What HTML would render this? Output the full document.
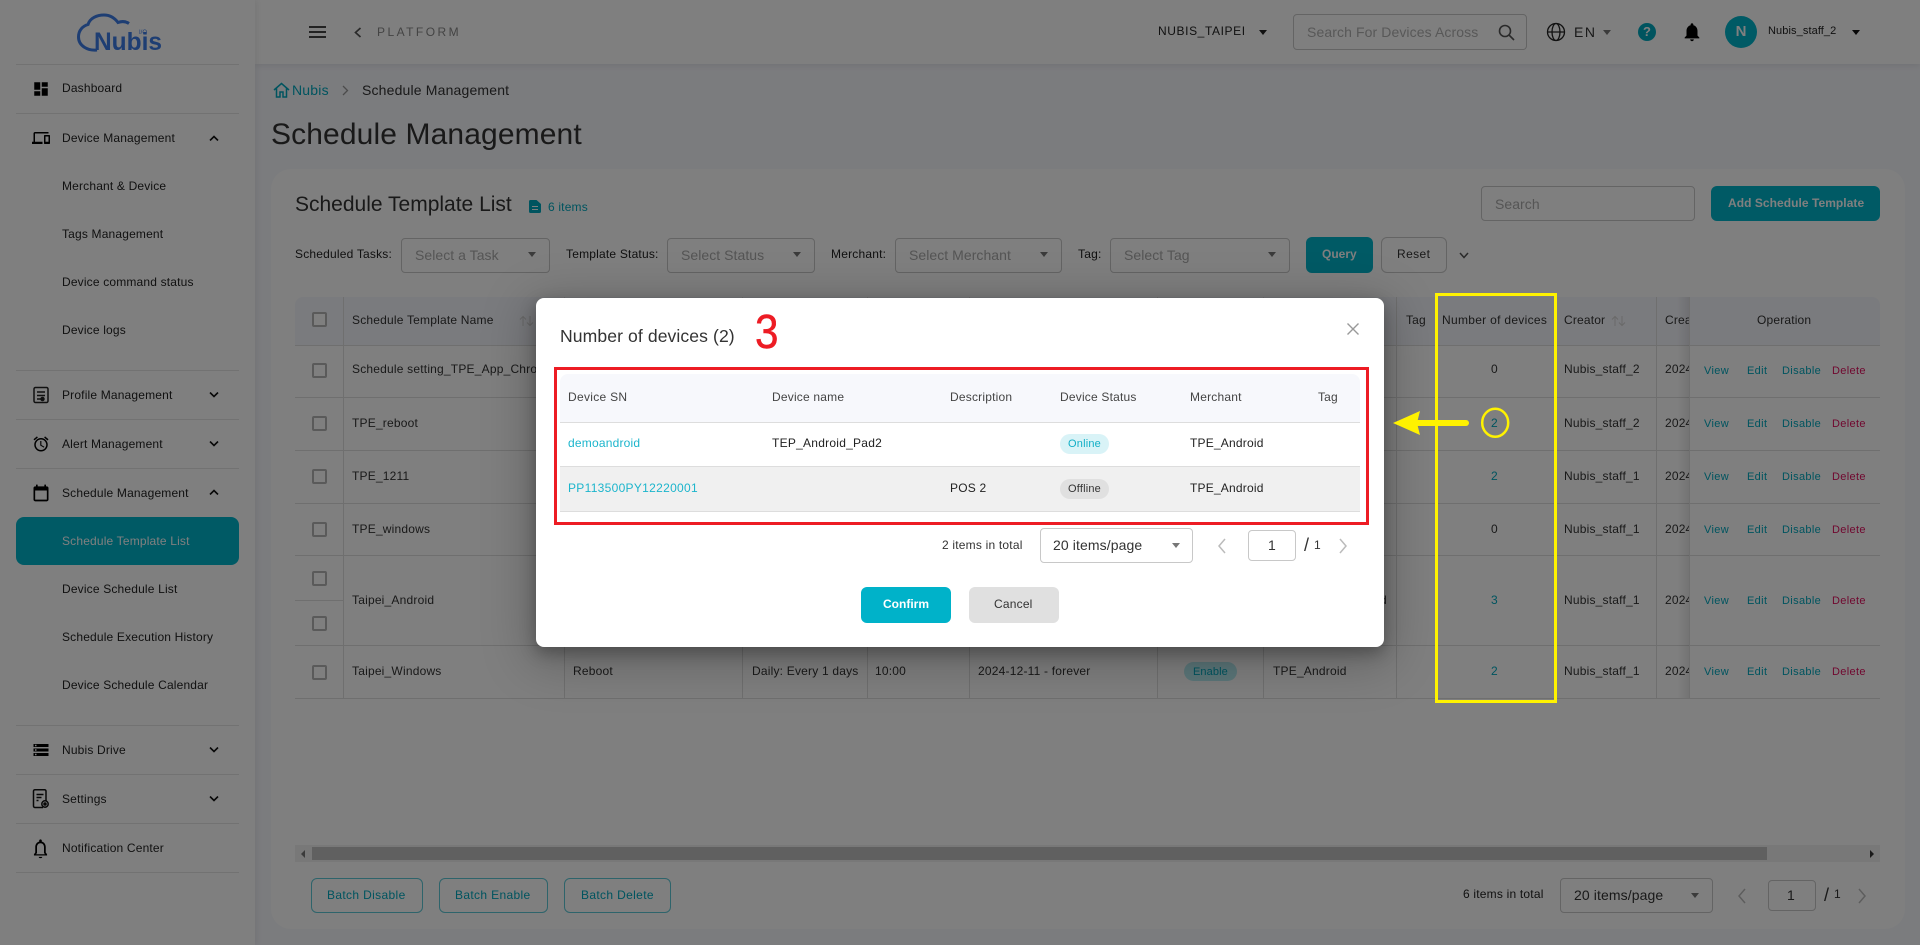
<!DOCTYPE html>
<html lang="en"><head><meta charset="utf-8"><title>Schedule Management</title>
<style>
*{box-sizing:border-box}
html,body{margin:0;padding:0;width:1920px;height:945px;overflow:hidden;background:#f7f8fd;font-family:"Liberation Sans",Arial,sans-serif}
.a{position:absolute}
.t{position:absolute;white-space:nowrap;line-height:16px;font-size:12px;letter-spacing:.17px;color:#333}
.s{color:#222;height:16px}
.hl{position:absolute;background:#dedede;height:1px}
.vl{position:absolute;background:#dedede;width:1px;top:297px;height:401px}
.sd{position:absolute;left:16px;width:223px;height:1px;background:#e4e4e4}
.ic{position:absolute;display:block;fill:#000}
.ch{position:absolute;left:209px;width:10px;height:6px;fill:none;stroke:#111;stroke-width:1.6}
.cb{position:absolute;left:312px;width:15px;height:15px;border:2px solid #b5b5b5;border-radius:2px;background:#fff}
.box{position:absolute;border:1px solid #c8c8c8;border-radius:4px;background:#fff}
.car{position:absolute;width:0;height:0;border-left:4px solid transparent;border-right:4px solid transparent;border-top:5px solid #777}
.ph{color:#aaa;font-size:14px;letter-spacing:.05px}
.tl{color:#00a9bf}
.del{color:#e0115f}
.op{font-size:11px;letter-spacing:.35px}
.pg{fill:none;stroke:#bbb;stroke-width:1.5;position:absolute}
.sort{position:absolute;fill:none;stroke:#d2d2d2;stroke-width:1}
</style></head><body>

<!-- PAGE -->
<div class="a" id="page" style="inset:0;width:1920px;height:945px;overflow:hidden">
<!-- top bar -->
<div class="a" style="left:255px;top:0;width:1665px;height:64px;background:#fff;box-shadow:0 2px 6px rgba(0,0,0,.08)"></div>
<!-- sidebar -->
<div class="a" style="left:0;top:0;width:255px;height:945px;background:#fff;box-shadow:2px 0 6px rgba(0,0,0,.07)"></div>

<!-- logo -->
<svg class="a" style="left:70px;top:8px" width="100" height="48" viewBox="70 8 100 48">
<path d="M97 50C88 51 78.500 46 78.500 37C78.500 30 83 26 88 24.500C90 18 97 15 104 15C111 15 115 18.500 118 22.500C122 21 126 21.500 129 23.500" fill="none" stroke="#3d7ce6" stroke-width="3"/>
<text x="94" y="50" font-family="Liberation Sans" font-weight="bold" font-size="25" textLength="68" lengthAdjust="spacingAndGlyphs" fill="#3d7ce6">Nubis</text>
<text x="139" y="34" font-family="Liberation Sans" font-size="6" fill="#3d7ce6">I/O</text>
</svg>

<!-- sidebar items -->
<div class="sd" style="top:64px"></div><div class="sd" style="top:113px"></div>
<div class="sd" style="top:370px"></div><div class="sd" style="top:419px"></div><div class="sd" style="top:468px"></div>
<div class="sd" style="top:725px"></div><div class="sd" style="top:774px"></div><div class="sd" style="top:823px"></div><div class="sd" style="top:872px"></div>
<div class="a" style="left:16px;top:517px;width:223px;height:48px;border-radius:8px;background:#00b4cb"></div>

<svg class="ic" style="left:32px;top:80px" width="18" height="18" viewBox="0 0 24 24"><path d="M3 13h8V3H3v10zm0 8h8v-6H3v6zm10 0h8V11h-8v10zm0-18v6h8V3h-8z"/></svg>
<div class="t s" style="left:62px;top:80px">Dashboard</div>
<svg class="ic" style="left:32px;top:129px" width="18" height="18" viewBox="0 0 24 24"><path d="M4 6h18V4H4c-1.100 0-2 .9-2 2v11H0v3h14v-3H4V6zm19 2h-6c-.55 0-1 .45-1 1v10c0 .55.45 1 1 1h6c.55 0 1-.45 1-1V9c0-.55-.45-1-1-1zm-1 9h-4v-7h4v7z"/></svg>
<div class="t s" style="left:62px;top:130px">Device Management</div>
<svg class="ch" style="top:135px" viewBox="0 0 10 6"><path d="M1 5.500L5 1.500L9 5.500"/></svg>
<div class="t s" style="left:62px;top:178px">Merchant &amp; Device</div>
<div class="t s" style="left:62px;top:226px">Tags Management</div>
<div class="t s" style="left:62px;top:274px">Device command status</div>
<div class="t s" style="left:62px;top:322px">Device logs</div>

<svg class="a" style="left:32px;top:386px" width="18" height="18" viewBox="0 0 18 18" fill="none" stroke="#222" stroke-width="1.500"><rect x="2" y="1.500" width="14" height="15" rx="1.500"/><path d="M5 6h8M5 9.500h8M5 13h5"/><circle cx="10.500" cy="13" r="1.500" fill="#222"/></svg>
<div class="t s" style="left:62px;top:387px">Profile Management</div>
<svg class="ch" style="top:392px" viewBox="0 0 10 6"><path d="M1 .5L5 4.500L9 .5"/></svg>
<svg class="ic" style="left:32px;top:435px" width="18" height="18" viewBox="0 0 24 24"><path d="M22 5.720l-4.600-3.860-1.290 1.530 4.600 3.860L22 5.720zM7.880 3.390L6.600 1.860 2 5.710l1.290 1.530 4.590-3.850zM12.500 8H11v6l4.750 2.850.75-1.230-4-2.370V8zM12 4c-4.970 0-9 4.030-9 9s4.030 9 9 9 9-4.030 9-9-4.030-9-9-9zm0 16c-3.870 0-7-3.130-7-7s3.130-7 7-7 7 3.130 7 7-3.130 7-7 7z"/></svg>
<div class="t s" style="left:62px;top:436px">Alert Management</div>
<svg class="ch" style="top:441px" viewBox="0 0 10 6"><path d="M1 .5L5 4.500L9 .5"/></svg>
<svg class="ic" style="left:31px;top:483px" width="20" height="20" viewBox="0 0 24 24"><path d="M19 4h-1V2h-2v2H8V2H6v2H5c-1.100 0-2 .9-2 2v14c0 1.100.9 2 2 2h14c1.100 0 2-.9 2-2V6c0-1.100-.9-2-2-2zm0 16H5V9h14v11z"/></svg>
<div class="t s" style="left:62px;top:485px">Schedule Management</div>
<svg class="ch" style="top:489px" viewBox="0 0 10 6"><path d="M1 5.500L5 1.500L9 5.500"/></svg>
<div class="t" style="left:62px;top:533px;color:#fff">Schedule Template List</div>
<div class="t s" style="left:62px;top:581px">Device Schedule List</div>
<div class="t s" style="left:62px;top:629px">Schedule Execution History</div>
<div class="t s" style="left:62px;top:677px">Device Schedule Calendar</div>

<svg class="ic" style="left:32px;top:741px" width="18" height="18" viewBox="0 0 24 24"><path d="M2 20h20v-4H2v4zm2-3h2v2H4v-2zM2 4v4h20V4H2zm4 3H4V5h2v2zm-4 7h20v-4H2v4zm2-3h2v2H4v-2z"/></svg>
<div class="t s" style="left:62px;top:742px">Nubis Drive</div>
<svg class="ch" style="top:747px" viewBox="0 0 10 6"><path d="M1 .5L5 4.500L9 .5"/></svg>
<svg class="a" style="left:32px;top:789px" width="18" height="20" viewBox="0 0 18 20" fill="none" stroke="#111" stroke-width="1.500"><path d="M11 18.500H3a1.500 1.500 0 0 1-1.500-1.500V2A1.500 1.500 0 0 1 3 .8h9A1.500 1.500 0 0 1 14 2v10"/><path d="M4.500 5.500h7M4.500 8.500h5M4.500 11.500h2"/><circle cx="13" cy="15" r="3.200"/><circle cx="13" cy="15" r="1" fill="#111"/></svg>
<div class="t s" style="left:62px;top:791px">Settings</div>
<svg class="ch" style="top:796px" viewBox="0 0 10 6"><path d="M1 .5L5 4.500L9 .5"/></svg>
<svg class="ic" style="left:30px;top:838px" width="21" height="21" viewBox="0 0 24 24"><path d="M12 23c1.100 0 2-.5 2-1.500h-4c0 1 .9 1.500 2 1.500zm6-6.500v-6c0-3.070-1.630-5.640-4.500-6.320V3c0-.83-.67-1.500-1.500-1.500s-1.500.67-1.500 1.500v1.180C7.640 4.860 6 7.420 6 10.500v6l-1.500 2v1.500h15v-1.500l-1.500-2zm-1 2H7l1-1.500v-6.500c0-2.480 1.510-4.500 4-4.500s4 2.020 4 4.500V17l1 1.500z"/></svg>
<div class="t s" style="left:62px;top:840px">Notification Center</div>

<!-- top bar contents -->
<svg class="a" style="left:309px;top:26px" width="17" height="12"><path d="M0 1h17M0 6h17M0 11h17" stroke="#444" stroke-width="2"/></svg>
<svg class="a" style="left:354px;top:27px" width="8" height="11" fill="none" stroke="#555" stroke-width="1.700"><path d="M6.500 1L1.500 5.500L6.500 10"/></svg>
<div class="t" style="left:377px;top:24px;color:#888;letter-spacing:2.450px;font-size:12px">PLATFORM</div>
<div class="t s" style="left:1158px;top:23px;letter-spacing:.6px;width:86px;overflow:hidden">NUBIS_TAIPEI</div>
<div class="car" style="left:1259px;top:30px;border-top-color:#222"></div>
<div class="box" style="left:1293px;top:14px;width:234px;height:36px"></div>
<div class="t ph" style="left:1307px;top:24px;width:171px;overflow:hidden;color:#b0b0b0;letter-spacing:.1px">Search For Devices Across</div>
<svg class="a" style="left:1498px;top:24px" width="17" height="17" fill="none" stroke="#555" stroke-width="1.600"><circle cx="7" cy="7" r="5.500"/><path d="M11 11L16 16"/></svg>
<svg class="a" style="left:1546px;top:22px" width="20" height="20" fill="none" stroke="#222" stroke-width="1.300"><circle cx="10" cy="10" r="8.500"/><ellipse cx="10" cy="10" rx="4" ry="8.500"/><path d="M1.500 10h17"/></svg>
<div class="t" style="left:1574px;top:24px;font-size:14px;letter-spacing:1.500px">EN</div>
<div class="car" style="left:1603px;top:30px"></div>
<div class="a" style="left:1638px;top:23px;width:18px;height:18px;border-radius:50%;background:#00a9bf;color:#fff;font:bold 13px/18px 'Liberation Sans',sans-serif;text-align:center">?</div>
<svg class="ic" style="left:1681px;top:21px" width="22" height="22" viewBox="0 0 24 24"><path d="M12 22c1.100 0 2-.9 2-2h-4c0 1.100.89 2 2 2zm6-6v-5c0-3.070-1.640-5.640-4.500-6.320V4c0-.83-.67-1.500-1.500-1.500s-1.500.67-1.500 1.500v.68C7.630 5.360 6 7.920 6 11v5l-2 2v1h16v-1l-2-2z"/></svg>
<div class="a" style="left:1725px;top:16px;width:32px;height:32px;border-radius:50%;background:#00b4cb;color:#fff;font:bold 15px/32px 'Liberation Sans',sans-serif;text-align:center">N</div>
<div class="t s" style="left:1768px;top:23px;font-size:11px;letter-spacing:.1px">Nubis_staff_2</div>
<div class="car" style="left:1852px;top:30px;border-top-color:#111"></div>

<!-- breadcrumb / title -->
<svg class="a" style="left:273px;top:82px" width="17" height="16" fill="none" stroke="#00a9bf" stroke-width="1.500"><path d="M1 8L8.500 1.500L16 8M3.500 6v9h3.500v-5h3v5h3.500V6"/></svg>
<div class="t tl" style="left:292px;top:82px;font-size:14px;letter-spacing:.2px">Nubis</div>
<svg class="a" style="left:342px;top:85px" width="7" height="11" fill="none" stroke="#999" stroke-width="1.300"><path d="M1 1L5.500 5.500L1 10"/></svg>
<div class="t" style="left:362px;top:82px;font-size:14px;letter-spacing:.17px">Schedule Management</div>
<div class="t" style="left:271px;top:116px;font-size:30px;line-height:38px;color:#333;letter-spacing:.12px">Schedule Management</div>

<!-- card -->
<div class="a" style="left:271px;top:169px;width:1634px;height:760px;background:#fff;border-radius:20px"></div>
<div class="t" style="left:295px;top:193px;font-size:21px;line-height:24px;letter-spacing:0">Schedule Template List</div>
<svg class="a" style="left:529px;top:200px" width="12" height="13"><path d="M1.500 0h6L12 4v7.500a1.500 1.500 0 0 1-1.500 1.500h-9A1.500 1.500 0 0 1 0 11.500v-10A1.500 1.500 0 0 1 1.500 0z" fill="#00a9bf"/><path d="M3 6.500h6M3 9.500h6" stroke="#fff" stroke-width="1.100"/></svg>
<div class="t tl" style="left:548px;top:199px">6 items</div>
<div class="box" style="left:1481px;top:186px;width:214px;height:35px;border-radius:4px"></div>
<div class="t ph" style="left:1495px;top:196px;color:#aaa">Search</div>
<div class="a" style="left:1711px;top:186px;width:169px;height:35px;border-radius:6px;background:#00b4cb"></div>
<div class="t" style="left:1728px;top:195px;color:#fff;font-weight:bold;letter-spacing:.05px;font-size:12px">Add Schedule Template</div>

<!-- filters -->
<div class="t s" style="left:295px;top:246px;letter-spacing:.2px">Scheduled Tasks:</div>
<div class="box" style="left:401px;top:238px;width:149px;height:35px"></div>
<div class="t ph" style="left:415px;top:247px">Select a Task</div><div class="car" style="left:528px;top:252px"></div>
<div class="t s" style="left:566px;top:246px;letter-spacing:.2px">Template Status:</div>
<div class="box" style="left:667px;top:238px;width:148px;height:35px"></div>
<div class="t ph" style="left:681px;top:247px">Select Status</div><div class="car" style="left:793px;top:252px"></div>
<div class="t s" style="left:831px;top:246px;letter-spacing:.2px">Merchant:</div>
<div class="box" style="left:895px;top:238px;width:167px;height:35px"></div>
<div class="t ph" style="left:909px;top:247px">Select Merchant</div><div class="car" style="left:1040px;top:252px"></div>
<div class="t s" style="left:1078px;top:246px;letter-spacing:.2px">Tag:</div>
<div class="box" style="left:1110px;top:238px;width:180px;height:35px"></div>
<div class="t ph" style="left:1124px;top:247px">Select Tag</div><div class="car" style="left:1268px;top:252px"></div>
<div class="a" style="left:1306px;top:237px;width:67px;height:36px;border-radius:6px;background:#00b4cb"></div>
<div class="t" style="left:1322px;top:246px;color:#fff;font-weight:bold;letter-spacing:0">Query</div>
<div class="box" style="left:1381px;top:237px;width:66px;height:36px;border-radius:6px"></div>
<div class="t" style="left:1397px;top:246px;letter-spacing:.4px">Reset</div>
<svg class="a" style="left:1459px;top:252px" width="10" height="7" fill="none" stroke="#555" stroke-width="1.500"><path d="M1 1L5 5.500L9 1"/></svg>

<!-- table -->
<div class="a" style="left:295px;top:297px;width:1585px;height:48px;background:#f5f6fc;border-radius:8px 8px 0 0"></div>
<div class="hl" style="left:295px;top:345px;width:1585px"></div>
<div class="hl" style="left:295px;top:397px;width:1585px"></div>
<div class="hl" style="left:295px;top:450px;width:1585px"></div>
<div class="hl" style="left:295px;top:503px;width:1585px"></div>
<div class="hl" style="left:295px;top:555px;width:1585px"></div>
<div class="hl" style="left:295px;top:600px;width:48px"></div>
<div class="hl" style="left:295px;top:645px;width:1585px"></div>
<div class="hl" style="left:295px;top:698px;width:1585px"></div>
<div class="vl" style="left:343px"></div><div class="vl" style="left:564px"></div><div class="vl" style="left:742px"></div>
<div class="vl" style="left:867px"></div><div class="vl" style="left:969px"></div><div class="vl" style="left:1157px"></div>
<div class="vl" style="left:1263px"></div><div class="vl" style="left:1396px"></div><div class="vl" style="left:1436px"></div>
<div class="vl" style="left:1554px"></div><div class="vl" style="left:1656px"></div>
<div class="a" style="left:1677px;top:297px;width:12px;height:401px;background:linear-gradient(90deg,rgba(0,0,0,0),rgba(0,0,0,.09))"></div>
<div class="vl" style="left:1689px"></div>

<div class="cb" style="top:312px"></div><div class="cb" style="top:363px"></div><div class="cb" style="top:416px"></div>
<div class="cb" style="top:469px"></div><div class="cb" style="top:522px"></div><div class="cb" style="top:571px"></div>
<div class="cb" style="top:616px"></div><div class="cb" style="top:665px"></div>

<div class="t" style="left:352px;top:312px;letter-spacing:.2px">Schedule Template Name</div>
<svg class="sort" style="left:519px;top:315px" width="16" height="12"><path d="M4 11V1.500M1 4.500L4 1.500L7 4.500M11 1V10.500M8 7.500L11 10.500L14 7.500"/></svg>
<div class="t" style="left:1406px;top:312px">Tag</div>
<div class="t" style="left:1442px;top:312px;letter-spacing:.3px">Number of devices</div>
<div class="t" style="left:1564px;top:312px">Creator</div>
<svg class="sort" style="left:1611px;top:315px" width="16" height="12"><path d="M4 11V1.500M1 4.500L4 1.500L7 4.500M11 1V10.500M8 7.500L11 10.500L14 7.500"/></svg>
<div class="t" style="left:1665px;top:312px;width:24px;overflow:hidden">Creation</div>
<div class="t" style="left:1757px;top:312px">Operation</div>

<div class="t" style="left:352px;top:361px;letter-spacing:.2px">Schedule setting_TPE_App_Chrome</div>
<div class="t" style="left:352px;top:415px;letter-spacing:.2px">TPE_reboot</div>
<div class="t" style="left:352px;top:468px;letter-spacing:.2px">TPE_1211</div>
<div class="t" style="left:352px;top:521px;letter-spacing:.2px">TPE_windows</div>
<div class="t" style="left:352px;top:592px;letter-spacing:.2px">Taipei_Android</div>
<div class="t" style="left:352px;top:663px;letter-spacing:.2px">Taipei_Windows</div>
<div class="t" style="left:573px;top:663px;letter-spacing:.2px">Reboot</div>
<div class="t" style="left:752px;top:663px;letter-spacing:.2px">Daily: Every 1 days</div>
<div class="t" style="left:875px;top:663px;letter-spacing:.2px">10:00</div>
<div class="t" style="left:978px;top:663px;letter-spacing:.2px">2024-12-11 - forever</div>
<div class="a" style="left:1184px;top:662px;width:53px;height:19px;border-radius:10px;background:#b6ecf2"></div>
<div class="t tl" style="left:1193px;top:664px;font-size:11px;letter-spacing:.1px">Enable</div>
<div class="t" style="left:1273px;top:663px;letter-spacing:.2px">TPE_Android</div>
<div class="t" style="left:1380px;top:592px">d</div>

<div class="t" style="left:1491px;top:361px">0</div><div class="t tl" style="left:1491px;top:415px">2</div>
<div class="t tl" style="left:1491px;top:468px">2</div><div class="t" style="left:1491px;top:521px">0</div>
<div class="t tl" style="left:1491px;top:592px">3</div><div class="t tl" style="left:1491px;top:663px">2</div>

<div class="t" style="left:1564px;top:361px;letter-spacing:.2px">Nubis_staff_2</div>
<div class="t" style="left:1564px;top:415px;letter-spacing:.2px">Nubis_staff_2</div>
<div class="t" style="left:1564px;top:468px;letter-spacing:.2px">Nubis_staff_1</div>
<div class="t" style="left:1564px;top:521px;letter-spacing:.2px">Nubis_staff_1</div>
<div class="t" style="left:1564px;top:592px;letter-spacing:.2px">Nubis_staff_1</div>
<div class="t" style="left:1564px;top:663px;letter-spacing:.2px">Nubis_staff_1</div>

<div class="t" style="left:1665px;top:361px;width:24px;overflow:hidden">2024-12</div>
<div class="t" style="left:1665px;top:415px;width:24px;overflow:hidden">2024-12</div>
<div class="t" style="left:1665px;top:468px;width:24px;overflow:hidden">2024-12</div>
<div class="t" style="left:1665px;top:521px;width:24px;overflow:hidden">2024-12</div>
<div class="t" style="left:1665px;top:592px;width:24px;overflow:hidden">2024-12</div>
<div class="t" style="left:1665px;top:663px;width:24px;overflow:hidden">2024-12</div>

<div class="t op tl" style="left:1704px;top:363px">View</div><div class="t op tl" style="left:1747px;top:363px">Edit</div><div class="t op tl" style="left:1782px;top:363px">Disable</div><div class="t op del" style="left:1832px;top:363px">Delete</div>
<div class="t op tl" style="left:1704px;top:416px">View</div><div class="t op tl" style="left:1747px;top:416px">Edit</div><div class="t op tl" style="left:1782px;top:416px">Disable</div><div class="t op del" style="left:1832px;top:416px">Delete</div>
<div class="t op tl" style="left:1704px;top:469px">View</div><div class="t op tl" style="left:1747px;top:469px">Edit</div><div class="t op tl" style="left:1782px;top:469px">Disable</div><div class="t op del" style="left:1832px;top:469px">Delete</div>
<div class="t op tl" style="left:1704px;top:522px">View</div><div class="t op tl" style="left:1747px;top:522px">Edit</div><div class="t op tl" style="left:1782px;top:522px">Disable</div><div class="t op del" style="left:1832px;top:522px">Delete</div>
<div class="t op tl" style="left:1704px;top:593px">View</div><div class="t op tl" style="left:1747px;top:593px">Edit</div><div class="t op tl" style="left:1782px;top:593px">Disable</div><div class="t op del" style="left:1832px;top:593px">Delete</div>
<div class="t op tl" style="left:1704px;top:664px">View</div><div class="t op tl" style="left:1747px;top:664px">Edit</div><div class="t op tl" style="left:1782px;top:664px">Disable</div><div class="t op del" style="left:1832px;top:664px">Delete</div>

<!-- scrollbar -->
<div class="a" style="left:295px;top:845px;width:1585px;height:17px;background:#f1f1f1"></div>
<div class="a" style="left:312px;top:847px;width:1455px;height:13px;background:#c1c1c1"></div>
<div class="a" style="left:301px;top:850px;width:0;height:0;border-top:4px solid transparent;border-bottom:4px solid transparent;border-right:4px solid #777"></div>
<div class="a" style="left:1870px;top:850px;width:0;height:0;border-top:4px solid transparent;border-bottom:4px solid transparent;border-left:4px solid #333"></div>

<!-- batch buttons -->
<div class="box" style="left:311px;top:878px;width:112px;height:35px;border-radius:6px;border-color:#5cc8d6"></div>
<div class="t tl" style="left:327px;top:887px;letter-spacing:.35px">Batch Disable</div>
<div class="box" style="left:439px;top:878px;width:109px;height:35px;border-radius:6px;border-color:#5cc8d6"></div>
<div class="t tl" style="left:455px;top:887px;letter-spacing:.35px">Batch Enable</div>
<div class="box" style="left:564px;top:878px;width:107px;height:35px;border-radius:6px;border-color:#5cc8d6"></div>
<div class="t tl" style="left:581px;top:887px;letter-spacing:.35px">Batch Delete</div>

<!-- page pagination -->
<div class="t s" style="left:1463px;top:886px;letter-spacing:.2px">6 items in total</div>
<div class="box" style="left:1560px;top:878px;width:153px;height:35px"></div>
<div class="t" style="left:1574px;top:887px;font-size:14px;letter-spacing:.1px">20 items/page</div>
<div class="car" style="left:1691px;top:893px"></div>
<svg class="pg" style="left:1737px;top:888px" width="10" height="16"><path d="M8 1L2 8L8 15"/></svg>
<div class="box" style="left:1768px;top:880px;width:48px;height:31px"></div>
<div class="t" style="left:1787px;top:887px;font-size:14px">1</div>
<div class="t" style="left:1824px;top:887px;font-size:18px;letter-spacing:0">/</div>
<div class="t" style="left:1834px;top:886px">1</div>
<svg class="pg" style="left:1857px;top:888px" width="10" height="16"><path d="M2 1L8 8L2 15"/></svg>
</div>

<!-- OVERLAY -->
<div class="a" style="left:0;top:0;width:1920px;height:945px;background:rgba(0,0,0,.5)"></div>

<!-- MODAL -->
<div class="a" style="left:536px;top:298px;width:848px;height:349px;background:#fff;border-radius:8px;box-shadow:0 6px 16px rgba(0,0,0,.28),0 10px 48px 8px rgba(0,0,0,.22)"></div>
<div class="t" style="left:560px;top:325px;font-size:17.600px;line-height:22px;letter-spacing:.08px;color:#333">Number of devices (2)</div>
<svg class="a" style="left:1347px;top:323px" width="12" height="12" stroke="#999" stroke-width="1.400"><path d="M.5 .5L11.500 11.500M11.500 .5L.5 11.500"/></svg>

<div class="a" style="left:560px;top:374px;width:800px;height:48px;background:#f7f8fc;border-radius:8px 8px 0 0"></div>
<div class="a" style="left:560px;top:422px;width:800px;height:1px;background:#ddd"></div>
<div class="a" style="left:560px;top:466px;width:800px;height:46px;background:#f0f0f0;border-top:1px solid #ddd;border-bottom:1px solid #ddd"></div>

<div class="t" style="left:568px;top:389px;color:#444;letter-spacing:.3px">Device SN</div>
<div class="t" style="left:772px;top:389px;color:#444;letter-spacing:.2px">Device name</div>
<div class="t" style="left:950px;top:389px;color:#444;letter-spacing:.2px">Description</div>
<div class="t" style="left:1060px;top:389px;color:#444;letter-spacing:.2px">Device Status</div>
<div class="t" style="left:1190px;top:389px;color:#444;letter-spacing:.2px">Merchant</div>
<div class="t" style="left:1318px;top:389px;color:#444">Tag</div>
<div class="t" style="left:568px;top:435px;color:#1cb5cc;letter-spacing:.2px">demoandroid</div>
<div class="t" style="left:772px;top:435px;letter-spacing:.25px;color:#222">TEP_Android_Pad2</div>
<div class="a" style="left:1060px;top:434px;width:49px;height:20px;border-radius:10px;background:#d9f3f7"></div>
<div class="t" style="left:1068px;top:436px;font-size:11px;color:#12afc6;letter-spacing:.2px">Online</div>
<div class="t" style="left:1190px;top:435px;letter-spacing:.2px;color:#222">TPE_Android</div>
<div class="t" style="left:568px;top:480px;color:#1cb5cc;letter-spacing:.3px">PP113500PY12220001</div>
<div class="t" style="left:950px;top:480px;letter-spacing:.2px;color:#222">POS 2</div>
<div class="a" style="left:1060px;top:479px;width:49px;height:20px;border-radius:10px;background:#e0e0e0"></div>
<div class="t" style="left:1068px;top:481px;font-size:11px;color:#333;letter-spacing:.2px">Offline</div>
<div class="t" style="left:1190px;top:480px;letter-spacing:.2px;color:#222">TPE_Android</div>

<div class="t" style="left:942px;top:537px;letter-spacing:.2px;color:#333">2 items in total</div>
<div class="box" style="left:1040px;top:528px;width:153px;height:35px"></div>
<div class="t" style="left:1053px;top:537px;font-size:14px;letter-spacing:.1px">20 items/page</div>
<div class="car" style="left:1172px;top:543px"></div>
<svg class="pg" style="left:1217px;top:538px" width="10" height="16"><path d="M8 1L2 8L8 15"/></svg>
<div class="box" style="left:1248px;top:530px;width:48px;height:31px"></div>
<div class="t" style="left:1268px;top:537px;font-size:14px">1</div>
<div class="t" style="left:1304px;top:537px;font-size:18px;letter-spacing:0">/</div>
<div class="t" style="left:1314px;top:537px">1</div>
<svg class="pg" style="left:1338px;top:538px" width="10" height="16"><path d="M2 1L8 8L2 15"/></svg>

<div class="a" style="left:861px;top:587px;width:90px;height:36px;border-radius:6px;background:#00b2c9"></div>
<div class="t" style="left:883px;top:596px;color:#fff;font-weight:bold;letter-spacing:0">Confirm</div>
<div class="a" style="left:969px;top:587px;width:90px;height:36px;border-radius:6px;background:#e0e0e0"></div>
<div class="t" style="left:994px;top:596px;color:#333;letter-spacing:.2px">Cancel</div>

<!-- ANNOTATIONS -->
<div class="a" style="left:554px;top:367px;width:815px;height:158px;border:3px solid #ed1c24"></div>
<div class="t" style="left:755px;top:312px;font-size:48px;line-height:42px;color:#ed1c24;letter-spacing:0;transform:scaleX(.88);transform-origin:left center;-webkit-text-stroke:.5px #ed1c24">3</div>
<div class="a" style="left:1435px;top:293px;width:122px;height:410px;border:3px solid #fff200"></div>
<svg class="a" style="left:1390px;top:405px" width="125" height="36" viewBox="1390 405 125 36">
<path d="M1466 423H1418" stroke="#fff200" stroke-width="6" stroke-linecap="round" fill="none"/>
<path d="M1393 423L1420 411L1417 423L1420 435z" fill="#fff200"/>
<ellipse cx="1495.200" cy="422.700" rx="13" ry="14" fill="none" stroke="#fff200" stroke-width="2.500"/>
</svg>
</body></html>
